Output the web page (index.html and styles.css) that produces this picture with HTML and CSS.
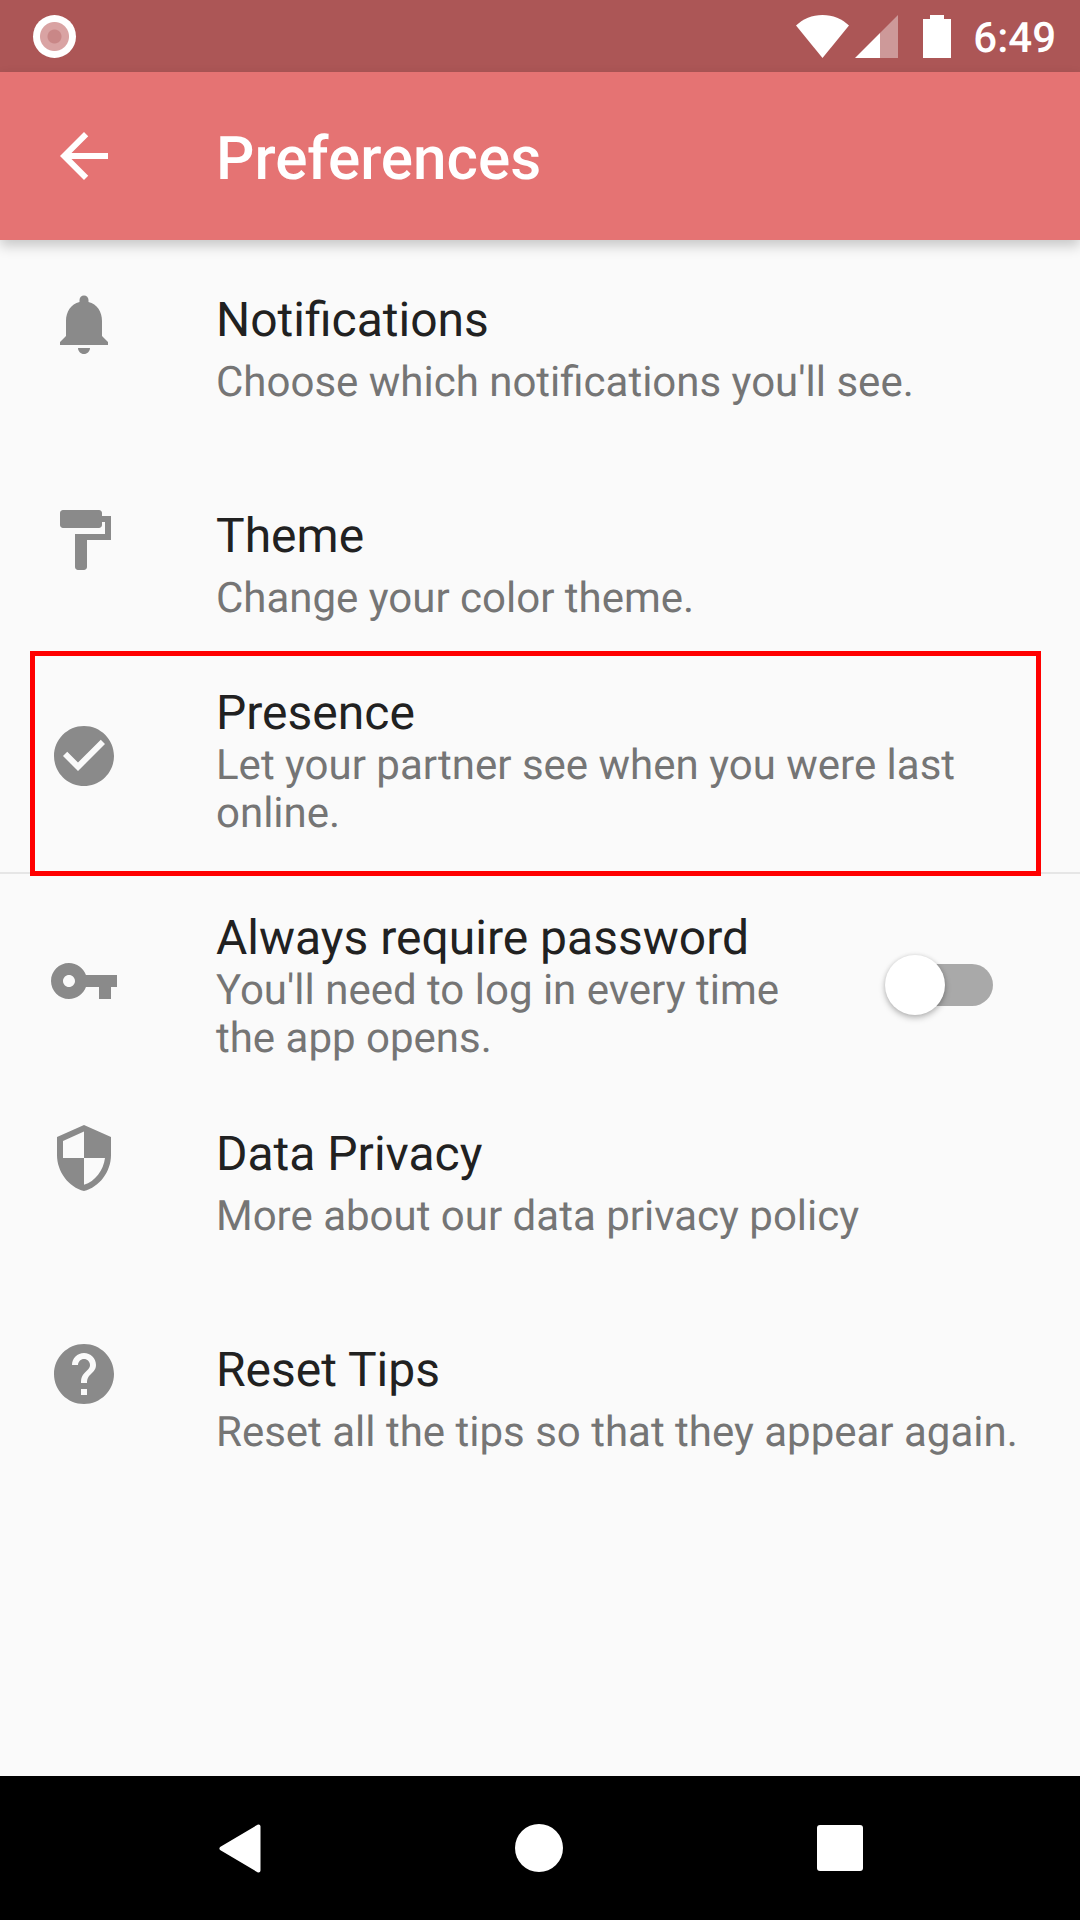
FILE: index.html
```html
<!DOCTYPE html>
<html>
	<head>
		<meta charset="UTF-8">
		<title>Preferences</title>
		<link rel="stylesheet" href="styles.css">
	</head>
	<body>
		<div class="statusbar">
			<div class="rec"></div>
			<div class="status-right">
				<svg class="wifi" width="53" height="43" viewBox="0 0 53 43"><path d="M0 10.500C7 4 16 0 26.500 0s19.500 4 26.500 10.500L26.500 43z" fill="#fff"/></svg>
				<svg class="signal" width="43" height="43" viewBox="0 0 43 43"><path d="M43 0v43H25V18z" fill="#fff" fill-opacity=".4"/><path d="M25 18v25H0z" fill="#fff"/></svg>
				<svg class="battery" width="28" height="43" viewBox="0 0 28 43"><path d="M7 0h14v4h7v39H0V4h7z" fill="#fff"/></svg>
				<span class="clock">6:49</span>
			</div>
		</div>
		<div class="appbar">
			<svg class="icon" viewBox="0 0 24 24"><path fill="#fff" d="M20 11H7.830l5.590-5.590L12 4l-8 8 8 8 1.410-1.410L7.830 13H20v-2z"/></svg>
			<div class="appbar-title">Preferences</div>
		</div>

		<div class="list">
			<div class="tile first">
				<svg class="icon" viewBox="0 0 24 24"><path d="M12 22c1.100 0 2-.9 2-2h-4c0 1.100.9 2 2 2zm6-6v-5c0-3.070-1.630-5.640-4.500-6.320V4c0-.83-.67-1.500-1.500-1.500s-1.500.67-1.500 1.500v.68C7.640 5.360 6 7.920 6 11v5l-2 2v1h16v-1l-2-2z"/></svg>
				<div class="text">
					<div class="name">Notifications</div>
					<div class="desc">Choose which notifications you'll see.</div>
				</div>
			</div>
			<div class="tile second">
				<svg class="icon" viewBox="0 0 24 24"><path d="M18 4V3c0-.55-.45-1-1-1H5c-.55 0-1 .45-1 1v4c0 .55.45 1 1 1h12c.55 0 1-.45 1-1V6h1v4H9v11c0 .55.45 1 1 1h2c.55 0 1-.45 1-1v-9h8V4h-3z"/></svg>
				<div class="text">
					<div class="name">Theme</div>
					<div class="desc">Change your color theme.</div>
				</div>
			</div>
			<div class="tile presence">
				<div class="highlight"></div>
				<svg class="icon" viewBox="0 0 24 24"><path d="M12 2C6.480 2 2 6.480 2 12s4.480 10 10 10 10-4.480 10-10S17.520 2 12 2zm-2 15l-5-5 1.410-1.410L10 14.170l7.590-7.590L19 8l-9 9z"/></svg>
				<div class="text tight">
					<div class="name">Presence</div>
					<div class="desc">Let your partner see when you were last online.</div>
				</div>
			</div>
			<div class="tile always">
				<svg class="icon" viewBox="0 0 24 24"><path d="M12.650 10C11.830 7.670 9.610 6 7 6c-3.310 0-6 2.690-6 6s2.690 6 6 6c2.610 0 4.830-1.670 5.650-4H17v4h4v-4h2v-4H12.650zM7 14c-1.100 0-2-.9-2-2s.9-2 2-2 2 .9 2 2-.9 2-2 2z"/></svg>
				<div class="text tight short">
					<div class="name">Always require password</div>
					<div class="desc">You'll need to log in every time the app opens.</div>
				</div>
				<div class="switch"><div class="thumb"></div></div>
			</div>
			<div class="tile first">
				<svg class="icon" viewBox="0 0 24 24"><path d="M12 1L3 5v6c0 5.550 3.840 10.740 9 12 5.160-1.260 9-6.450 9-12V5l-9-4zm0 10.990h7c-.53 4.120-3.280 7.790-7 8.940V12H5V6.300l7-3.110v8.800z"/></svg>
				<div class="text">
					<div class="name">Data Privacy</div>
					<div class="desc">More about our data privacy policy</div>
				</div>
			</div>
			<div class="tile first">
				<svg class="icon" viewBox="0 0 24 24"><path d="M12 2C6.480 2 2 6.480 2 12s4.480 10 10 10 10-4.480 10-10S17.520 2 12 2zm1 17h-2v-2h2v2zm2.070-7.750l-.9.92C13.450 12.900 13 13.500 13 15h-2v-.5c0-1.100.45-2.100 1.170-2.830l1.240-1.260c.37-.36.59-.86.59-1.410 0-1.100-.9-2-2-2s-2 .9-2 2H8c0-2.210 1.790-4 4-4s4 1.790 4 4c0 .88-.36 1.680-.93 2.250z"/></svg>
				<div class="text">
					<div class="name">Reset Tips</div>
					<div class="desc">Reset all the tips so that they appear again.</div>
				</div>
			</div>
		</div>

		<div class="navbar">
			<svg width="42" height="49" viewBox="0 0 42 49"><polygon points="2.500,24.500 39.500,2.500 39.500,46.500" fill="#fff" stroke="#fff" stroke-width="4" stroke-linejoin="round"/></svg>
			<div class="home"></div>
			<div class="square"></div>
		</div>
	</body>
</html>
```

FILE: styles.css
```css
*{
	margin: 0;
	padding: 0;
	box-sizing: border-box;
}
html,body{
	height: 100%;
}
body{
	display: flex;
	flex-direction: column;
	background: #fafafa;
	font-family: Roboto, sans-serif;
	text-rendering: geometricPrecision;
	overflow: hidden;
}
.statusbar{
	flex: none;
	display: flex;
	align-items: center;
	justify-content: space-between;
	height: 72px;
	padding: 0 24px 0 33px;
	background: #ac5656;
}
.rec{
	width: 43px;
	height: 43px;
	border-radius: 50%;
	background: radial-gradient(circle, #c98787 0 6.500px, #d9a3a3 7.500px 14px, #fff 15px);
}
.status-right{
	display: flex;
	align-items: flex-start;
	height: 43px;
}
.wifi{
	margin-right: 6px;
}
.signal{
	margin-right: 25px;
}
.battery{
	margin-right: 22px;
}
.clock{
	color: #fff;
	font-size: 42px;
	font-weight: 500;
	line-height: 48px;
}
.appbar{
	flex: none;
	position: relative;
	display: flex;
	align-items: center;
	height: 168px;
	padding-left: 48px;
	background: #e57373;
	box-shadow: 0 6px 12px rgba(0,0,0,.2);
}
.appbar-title{
	margin: 4px 0 0 96px;
	color: #fff;
	font-size: 60.200px;
	font-weight: 500;
}
.icon{
	flex: none;
	width: 72px;
	height: 72px;
	fill: #8a8a8a;
}
.list{
	flex: 1;
}
.tile{
	position: relative;
	display: flex;
	padding-left: 48px;
}
.first{
	height: 216px;
	padding-top: 48px;
}
.second{
	height: 184px;
	padding-top: 48px;
}
.presence{
	align-items: center;
	height: 234px;
	border-bottom: 2px solid #e6e6e6;
}
.always{
	align-items: center;
	height: 200px;
	padding-top: 14px;
}
.text{
	flex: 1;
	margin-left: 96px;
	padding-right: 42px;
}
.name{
	color: #212121;
	font-size: 48px;
	line-height: 56px;
	margin-top: 4px;
}
.desc{
	color: #757575;
	font-size: 42px;
	line-height: 48px;
	margin-top: 11px;
}
.tight{
	margin-top: 8px;
}
.tight .name{
	margin-top: 3px;
}
.tight .desc{
	margin-top: 1px;
}
.short{
	padding-right: 50px;
}
.switch{
	flex: none;
	position: relative;
	width: 102px;
	height: 42px;
	margin: 8px 87px 0 0;
	border-radius: 21px;
	background: #a9a9a9;
}
.thumb{
	position: absolute;
	left: -6px;
	top: -9px;
	width: 60px;
	height: 60px;
	border-radius: 50%;
	background: #fff;
	box-shadow: 0 3px 6px rgba(0,0,0,.25), 0 0 4px rgba(0,0,0,.1);
}
.highlight{
	position: absolute;
	left: 30px;
	right: 39px;
	top: 11px;
	height: 225px;
	border: 5px solid #f00;
	z-index: 2;
}
.navbar{
	flex: none;
	display: grid;
	grid-template-columns: 42px 48px 46px;
	justify-content: space-between;
	align-items: center;
	height: 144px;
	padding: 0 217px 0 219px;
	background: #000;
}
.home{
	width: 48px;
	height: 48px;
	border-radius: 50%;
	background: #fff;
}
.square{
	width: 46px;
	height: 46px;
	border-radius: 3px;
	background: #fff;
}
```
